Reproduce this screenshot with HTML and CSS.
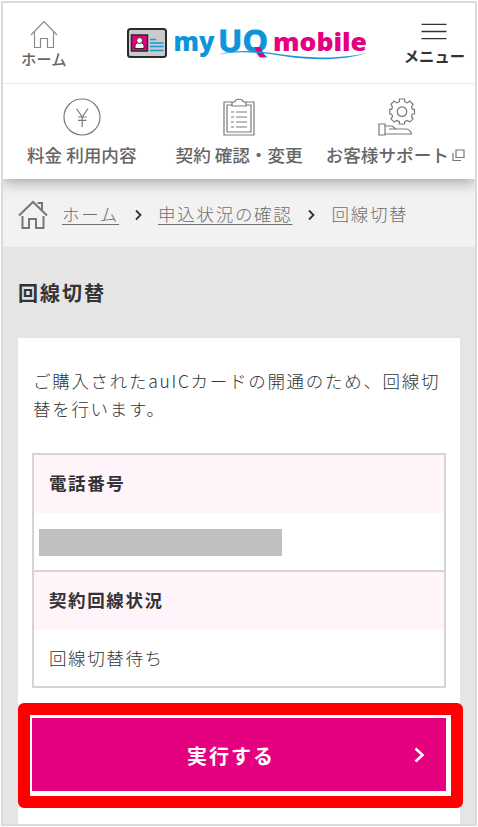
FILE: index.html
```
<!DOCTYPE html>
<html lang="ja">
  <head>
    <meta charset="UTF-8" />
    <meta name="viewport" content="width=device-width, initial-scale=1.0" />
    <title>回線切替 | my UQ mobile</title>
    <link rel="stylesheet" href="styles.css">
  </head>
  <body>
    <div class="screen">
      <header class="header">
        <a class="header-home">
          <svg width="28" height="30" viewBox="0 0 28 30" fill="none" stroke="#8a8a8a" stroke-width="1.2">
            <path d="M1 15L14 1.5L27 15M4.5 12V27.500H10.500V18.500H17.500V27.500H23.500V12" />
          </svg>
          <span>ホーム</span>
        </a>

        <svg class="logo" width="244" height="36" viewBox="0 0 244 36">
          <!-- ID card -->
          <rect x="2" y="3" width="38" height="28" rx="2.500" fill="#c9caca" stroke="#2b2b2b" stroke-width="2" />
          <rect x="5.500" y="9" width="16" height="16" fill="#e4007f" stroke="#2b2b2b" stroke-width="1.500" />
          <path d="M9 22.500V19L11.500 16.500H15.500L18 19V22.500Z" fill="#fff" stroke="#2b2b2b" />
          <circle cx="13.600" cy="14.500" r="3" fill="#fff" stroke="#2b2b2b" />
          <path d="M24 13.500H30M24 17H37.500M24 20.500H37.500M24 24.500H37.500" stroke="#1b97d8" stroke-width="1.500" />
          <!-- Wordmark -->
          <text class="logo-text logo-blue" x="47.500" y="25" font-size="26" textLength="41" lengthAdjust="spacingAndGlyphs">my</text>
          <text class="logo-text logo-pink" x="147" y="25" font-size="25" textLength="94" lengthAdjust="spacingAndGlyphs">mobile</text>
          <text class="logo-uq logo-blue" x="92" y="26" font-size="30" textLength="50" lengthAdjust="spacingAndGlyphs">UQ</text>
          <path d="M128 21H134L139.500 31H134Z" fill="#e4007f" />
          <path d="M92 28.500C115 22 140 26 160 29C190 33 220 32 240 27C221 34 190 35 160 30.500C137 27 115 24 92 28.500Z" fill="#1b97d8" />
        </svg>

        <a class="header-menu">
          <svg width="26" height="18" viewBox="0 0 26 18" stroke="#333" stroke-width="1.300">
            <path d="M0.500 2.300H25.500M0.500 9.500H25.500M0.500 16.600H25.500" />
          </svg>
          <span>メニュー</span>
        </a>
      </header>

      <nav class="nav">
        <a class="nav-item">
          <svg width="38" height="38" viewBox="0 0 38 38" fill="none" stroke="#7a7a7a" stroke-width="1.200">
            <circle cx="19" cy="19" r="18" />
            <path d="M13.500 10.500L19.200 19L25 10.500M19.200 19V29M15 19H23.500M15 22.300H23.500" />
          </svg>
          <span>料金 利用内容</span>
        </a>
        <a class="nav-item">
          <svg width="32" height="38" viewBox="0 0 32 38" fill="none" stroke="#7a7a7a" stroke-width="1.200">
            <path d="M9 4H1V37H31V4H23" />
            <path d="M9 7H4V34H28V7H23" />
            <path d="M9 8V4.500L12 3.500C12.500 0.500 19.500 0.500 20 3.500L23 4.500V8Z" />
            <path d="M8 14H11M13 14H24M8 19H11M13 19H24M8 24H11M13 24H24M8 29H11M13 29H24" />
          </svg>
          <span>契約 確認・変更</span>
        </a>
        <a class="nav-item">
          <svg class="support-icon" width="38" height="38" viewBox="0 0 38 38" fill="none" stroke="#7a7a7a" stroke-width="1.200">
            <path d="M21.400 1H26.600V3.700L29.400 4.900L31.800 3.100L35.100 6.400L33.500 9L34.400 11.400H36.500V16H34.400L33.400 18.600L35.100 20.800L31.800 24.100L29.400 22.500L26.600 23.600V26H21.400V23.600L18.600 22.500L16.200 24.100L12.900 20.800L14.600 18.600L13.600 16H11.800V11.400H13.600L14.500 9L12.900 6.400L16.200 3.100L18.600 4.900L21.400 3.700Z" />
            <circle cx="24" cy="13.600" r="4.800" />
            <path d="M1 26H7V37H1ZM7 28H14L18 31H27C31 31 33 33 33.500 36H7M11 31H19" />
          </svg>
          <span>お客様サポート<svg class="blank-icon" width="13" height="13" viewBox="0 0 13 13" fill="none" stroke="#777" stroke-width="1.200"><path d="M4 1H12V8.500H4ZM1 4V11.500H9" /></svg></span>
        </a>
      </nav>

      <div class="breadcrumb">
        <svg width="30" height="30" viewBox="0 0 30 30" fill="none" stroke="#777" stroke-width="2">
          <path d="M1 15.500L15 2L29 15.500M4.500 16V28H11V19H18V28H25.500V16M19.500 3H24V10" />
        </svg>
        <a class="link">ホーム</a>
        <svg class="chevron" width="7" height="12" viewBox="0 0 7 12" fill="none" stroke="#333" stroke-width="1.800"><path d="M1 1.500L5.500 6L1 10.500" /></svg>
        <a class="link">申込状況の確認</a>
        <svg class="chevron" width="7" height="12" viewBox="0 0 7 12" fill="none" stroke="#333" stroke-width="1.800"><path d="M1 1.500L5.500 6L1 10.500" /></svg>
        <span>回線切替</span>
      </div>

      <main class="main">
        <h1>回線切替</h1>
        <section class="card">
          <p>ご購入されたauICカードの開通のため、回線切替を行います。</p>
          <dl class="info">
            <dt>電話番号</dt>
            <dd class="masked"><span class="mask"></span></dd>
            <dt>契約回線状況</dt>
            <dd>回線切替待ち</dd>
          </dl>
          <div class="highlight">
            <button class="submit">
              実行する
              <svg class="submit-arrow" width="11" height="16" viewBox="0 0 11 16" fill="none" stroke="#fff" stroke-width="2.500"><path d="M1.500 1.500L8.500 8L1.500 14.500" /></svg>
            </button>
          </div>
        </section>
      </main>
    </div>
  </body>
</html>
```

FILE: styles.css
```
* {
  box-sizing: border-box;
}

body {
  margin: 0;
  padding: 1px;
  background: #fff;
  font-family: "Noto Sans CJK JP", sans-serif;
  color: #333;
}

svg {
  display: block;
  flex-shrink: 0;
}

.screen {
  width: 476px;
  height: 825px;
  border: 2px solid #d9dada;
  overflow: hidden;
  display: flex;
  flex-direction: column;
}

/* Header */
.header {
  position: relative;
  z-index: 2;
  height: 81px;
  flex-shrink: 0;
  display: flex;
  justify-content: space-between;
  padding: 0 10px 0 18px;
  background: #fff;
  border-bottom: 1px solid #eee;
  font-size: 15.3px;
  font-weight: 500;
  line-height: 20px;
}

.header-home {
  display: flex;
  flex-direction: column;
  align-items: center;
  padding-top: 17px;
  color: #666;
}

.header-home span {
  margin-top: -2px;
}

.header-menu {
  display: flex;
  flex-direction: column;
  align-items: center;
  padding-top: 19px;
  font-weight: 700;
}

.header-menu span {
  margin-top: 5px;
}

.logo {
  margin: 23px 0 0 26px;
  overflow: visible;
}

.logo-text {
  font-family: "Open Sans", sans-serif;
  font-weight: 800;
}

.logo-uq {
  font-family: "Noto Sans", sans-serif;
  font-weight: 700;
  stroke: #0d94d9;
  stroke-width: 0.8px;
}

.logo-blue {
  fill: #0d94d9;
}

.logo-pink {
  fill: #e4007f;
}

/* Global navigation */
.nav {
  position: relative;
  z-index: 1;
  height: 95px;
  flex-shrink: 0;
  display: flex;
  gap: 39px;
  padding: 14px 9px 0 24px;
  background: #fff;
  box-shadow: 0 3px 14px rgba(0, 0, 0, 0.35);
  font-size: 17.6px;
  font-weight: 500;
  line-height: 24px;
  color: #666;
}

.nav-item {
  display: flex;
  flex-direction: column;
  align-items: center;
}

.nav-item:last-child {
  margin-left: -16px;
}

.nav-item span {
  display: flex;
  align-items: center;
  margin-top: 7px;
  white-space: pre;
}

.support-icon {
  margin-left: 3px;
}

.blank-icon {
  margin-left: 3px;
}

/* Breadcrumb */
.breadcrumb {
  height: 68px;
  flex-shrink: 0;
  display: flex;
  align-items: center;
  padding: 4px 0 0 15px;
  background: #f2f2f2;
  font-size: 17.5px;
  font-weight: 300;
  letter-spacing: 1.7px;
  line-height: 24px;
  color: #6f6f6f;
}

.link {
  text-decoration: underline;
  text-underline-offset: 3px;
}

.breadcrumb span,
.link {
  margin-top: -2px;
}

.breadcrumb svg + .link {
  margin-left: 14px;
}

.breadcrumb .chevron {
  margin-left: 16px;
}

.breadcrumb .chevron + .link,
.breadcrumb .chevron + span {
  margin-left: 16px;
}

/* Content */
.main {
  flex: 1;
  padding: 31px 15px 0;
  background: #e5e5e5;
}

h1 {
  margin: 0 0 30px;
  font-size: 20px;
  font-weight: 700;
  letter-spacing: 2px;
  line-height: 30px;
}

.card {
  height: 486px;
  padding: 29px 14px 0;
  background: #fff;
}

.card p {
  margin: 0 0 30px;
  padding-left: 1px;
  font-size: 17.5px;
  font-weight: 300;
  letter-spacing: 1.7px;
  line-height: 28px;
  color: #333;
}

.info {
  margin: 0 0 15px;
  border: 2px solid #d6d5d6;
  font-size: 17.5px;
  letter-spacing: 1.6px;
}

.info dt {
  height: 58px;
  padding: 0 15px;
  background: #fff4fa;
  font-weight: 700;
  line-height: 56px;
}

.info dd {
  height: 56px;
  margin: 0;
  padding: 0 15px;
  font-weight: 300;
  line-height: 56px;
  color: #333;
}

.info .masked {
  height: 59px;
  padding: 16px 5px 0;
  border-bottom: 2px solid #d6d5d6;
}

.mask {
  display: block;
  width: 243px;
  height: 27px;
  background: #bfbfbf;
}

/* Red frame around the action */
.highlight {
  width: 445px;
  height: 105px;
  margin-left: -14px;
  padding: 3px 5px 5px 2px;
  border: 12px solid #f00;
  border-radius: 6px;
}

.submit {
  display: flex;
  justify-content: center;
  align-items: center;
  position: relative;
  width: 414px;
  height: 73px;
  padding: 1px 16px 0 0;
  border: none;
  background: #e4007f;
  color: #fff;
  font-family: inherit;
  font-size: 20px;
  font-weight: 700;
  letter-spacing: 2px;
}

.submit-arrow {
  position: absolute;
  right: 21px;
  top: 29px;
}
```
